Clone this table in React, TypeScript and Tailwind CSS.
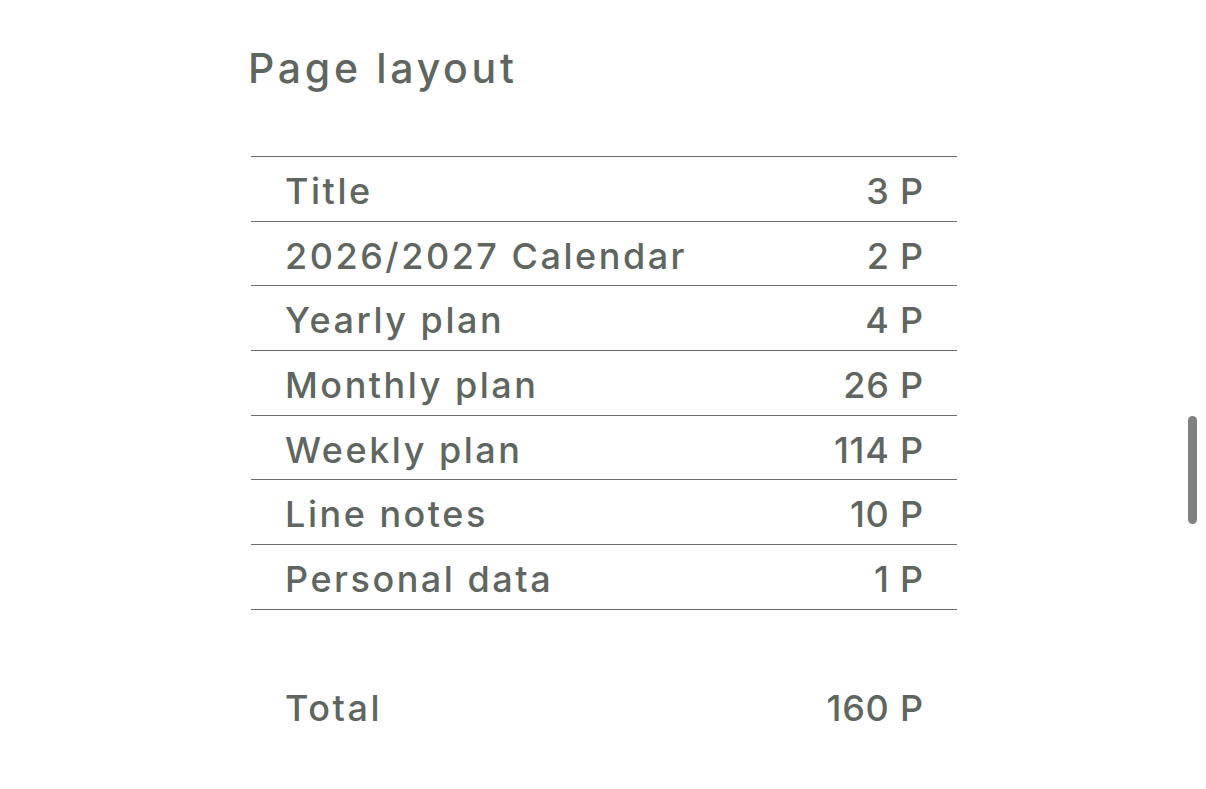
const rows = [
  { label: 'Title', pages: '3 P' },
  { label: '2026/2027 Calendar', pages: '2 P' },
  { label: 'Yearly plan', pages: '4 P' },
  { label: 'Monthly plan', pages: '26 P' },
  { label: 'Weekly plan', pages: '114 P' },
  { label: 'Line notes', pages: '10 P' },
  { label: 'Personal data', pages: '1 P' },
];

export default function App() {
  return (
    <div className="relative w-[1206px] h-[789px] overflow-hidden bg-white text-[#5f665f] font-['Inter',sans-serif]">
      <div className="pl-[248px] pt-[40px]">
        <h1 className="text-[41px] leading-[56px] tracking-[0.09em] font-medium">Page layout</h1>
        <div className="mt-[60px] ml-[3px] w-[706px] border-t border-[#6b6b6b]">
          {rows.map((r) => (
            <div
              key={r.label}
              className="flex items-center justify-between h-[64.7px] border-b border-[#6b6b6b] pl-[34px] pr-[34px] pt-[4px] text-[36px] font-[450]"
            >
              <span className="tracking-[0.07em]">{r.label}</span>
              <span className="tracking-[0.02em] -mr-[0.02em]">{r.pages}</span>
            </div>
          ))}
          <div className="flex items-center justify-between h-[65px] mt-[65px] pl-[34px] pr-[34px] pt-[2px] text-[36px] font-[450]">
            <span className="tracking-[0.07em]">Total</span>
            <span className="tracking-[0.02em] -mr-[0.02em]">160 P</span>
          </div>
        </div>
      </div>
      <div className="absolute left-[1188px] top-[416px] w-[9px] h-[108px] rounded-full bg-[#808080]" />
    </div>
  );
}
